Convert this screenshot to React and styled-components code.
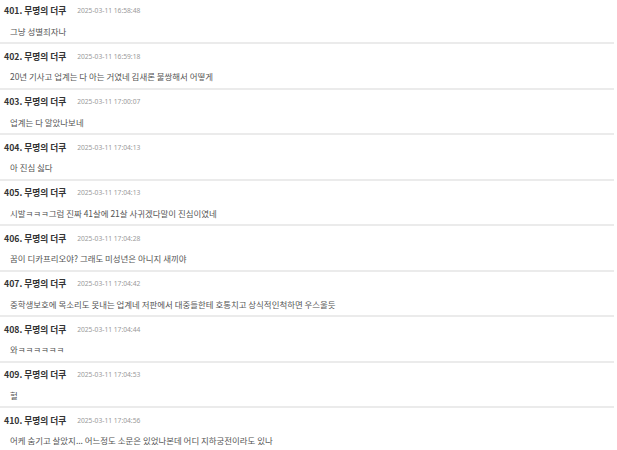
import React from "react";
import styled, { createGlobalStyle } from "styled-components";

const Global = createGlobalStyle`
  html, body { margin: 0; padding: 0; background: #fff; }
  body { font-family: "Noto Sans CJK KR", "Noto Sans", sans-serif; }
`;

const List = styled.ul`
  list-style: none;
  margin: -1.5px 0 0;
  padding: 0;
  width: 614px;
`;

const Item = styled.li`
  height: 43.5px;
  box-sizing: content-box;
  padding: 0;
  border-bottom: 2px solid #ebebeb;
  display: flex;
  flex-direction: column;
`;

const Header = styled.div`
  display: flex;
  align-items: center;
  height: 12px;
  margin-top: 6.5px;
  padding-left: 4px;
`;

const Name = styled.span`
  font-size: 8.7px;
  font-weight: 700;
  color: #333;
  line-height: 12px;
  white-space: nowrap;
`;

const Time = styled.span`
  font-family: "Noto Sans", "Open Sans", sans-serif;
  font-size: 6.7px;
  color: #9a9a9a;
  margin-left: 11px;
  line-height: 12px;
  white-space: nowrap;
`;

const Body = styled.div`
  margin-top: 7.5px;
  padding-left: 10px;
  font-size: 8.45px;
  line-height: 12px;
  color: #555;
  white-space: nowrap;
`;

const data = [
  [401, "2025-03-11 16:58:48", "그냥 성별죄자나"],
  [402, "2025-03-11 16:59:18", "20년 기사고 업계는 다 아는 거였네 김새론 불쌍해서 어떻게"],
  [403, "2025-03-11 17:00:07", "업계는 다 알았나보네"],
  [404, "2025-03-11 17:04:13", "아 진심 싫다"],
  [405, "2025-03-11 17:04:13", "시발ㅋㅋㅋ그럼 진짜 41살에 21살 사귀겠다말이 진심이였네"],
  [406, "2025-03-11 17:04:28", "꿈이 디카프리오야? 그래도 미성년은 아니지 새끼야"],
  [407, "2025-03-11 17:04:42", "중학생보호에 목소리도 못내는 업계네 저판에서 대중들한테 호통치고 상식적인척하면 우스울듯"],
  [408, "2025-03-11 17:04:44", "와ㅋㅋㅋㅋㅋㅋ"],
  [409, "2025-03-11 17:04:53", "헐"],
  [410, "2025-03-11 17:04:56", "어케 숨기고 살았지... 어느정도 소문은 있었나본데 어디 지하궁전이라도 있나"],
];

export default function App() {
  return (
    <>
      <Global />
      <List>
        {data.map(([n, t, text]) => (
          <Item key={n}>
            <Header>
              <Name>{n}. 무명의 더쿠</Name>
              <Time>{t}</Time>
            </Header>
            <Body>{text}</Body>
          </Item>
        ))}
      </List>
    </>
  );
}
